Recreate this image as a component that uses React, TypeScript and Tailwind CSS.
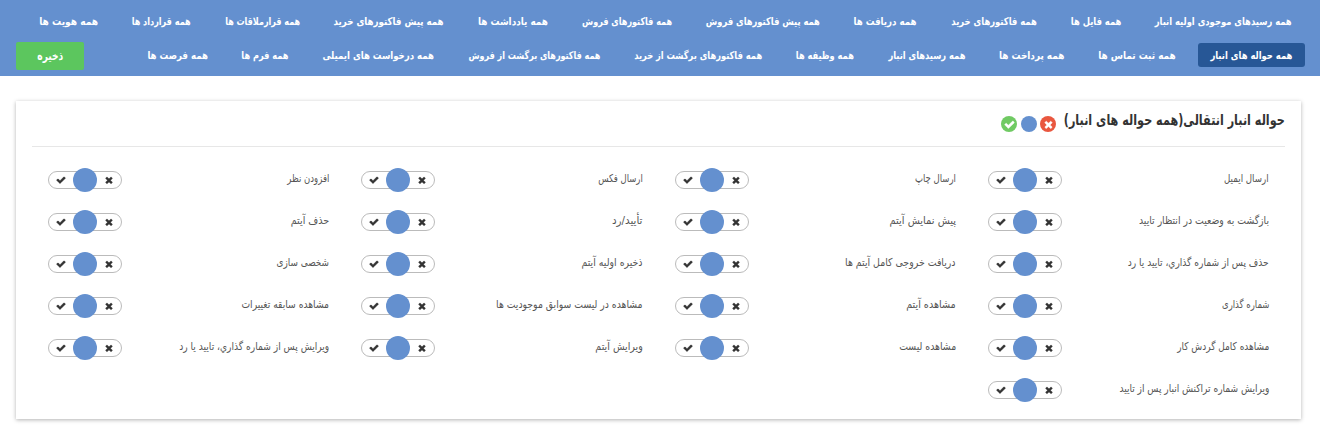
import { useLayoutEffect, useRef } from "react";

type Entry = { text: string; width: number };

const topRow: Entry[] = [
  { text: "همه رسیدهای موجودی اولیه انبار", width: 137 },
  { text: "همه فایل ها", width: 50.5 },
  { text: "همه فاکتورهای خرید", width: 85.5 },
  { text: "همه دریافت ها", width: 63 },
  { text: "همه پیش فاکتورهای فروش", width: 114 },
  { text: "همه فاکتورهای فروش", width: 90 },
  { text: "همه یادداشت ها", width: 70 },
  { text: "همه پیش فاکتورهای خرید", width: 110 },
  { text: "همه قرارملاقات ها", width: 75 },
  { text: "همه قرارداد ها", width: 59 },
  { text: "همه هویت ها", width: 59 },
];

const bottomRow: Entry[] = [
  { text: "همه حواله های انبار", width: 82 },
  { text: "همه ثبت تماس ها", width: 77.5 },
  { text: "همه پرداخت ها", width: 65.5 },
  { text: "همه رسیدهای انبار", width: 77 },
  { text: "همه وظیفه ها", width: 58 },
  { text: "همه فاکتورهای برگشت از خرید", width: 128 },
  { text: "همه فاکتورهای برگشت از فروش", width: 132 },
  { text: "همه درخواست های ایمیلی", width: 111.5 },
  { text: "همه فرم ها", width: 47 },
  { text: "همه فرصت ها", width: 60.5 },
];

const permissions: Entry[] = [
  { text: "ارسال ایمیل", width: 44.5 },
  { text: "ارسال چاپ", width: 41 },
  { text: "ارسال فکس", width: 44.5 },
  { text: "افزودن نظر", width: 42 },
  { text: "بازگشت به وضعیت در انتظار تایید", width: 130 },
  { text: "پیش نمایش آیتم", width: 66.5 },
  { text: "تأیید/رد", width: 30.5 },
  { text: "حذف آیتم", width: 38.5 },
  { text: "حذف پس از شماره گذاري، تایید یا رد", width: 141 },
  { text: "دریافت خروجی کامل آیتم ها", width: 110.5 },
  { text: "ذخیره اولیه آیتم", width: 61 },
  { text: "شخصی سازی", width: 52.5 },
  { text: "شماره گذاری", width: 47.5 },
  { text: "مشاهده آیتم", width: 49.5 },
  { text: "مشاهده در لیست سوابق موجودیت ها", width: 146.5 },
  { text: "مشاهده سابقه تغییرات", width: 87.5 },
  { text: "مشاهده کامل گردش کار", width: 92 },
  { text: "مشاهده لیست", width: 57 },
  { text: "ویرایش آیتم", width: 47.5 },
  { text: "ویرایش پس از شماره گذاري، تایید یا رد", width: 150 },
  { text: "ویرایش شماره تراکنش انبار پس از تایید", width: 150 },
];

/* Condenses a line of text horizontally so that it fills the given width. */
function FitText({ text, width }: Entry) {
  const ref = useRef<HTMLSpanElement>(null);
  useLayoutEffect(() => {
    const el = ref.current;
    if (el) {
      el.style.transform = "none";
      el.style.transform = `scaleX(${width / el.getBoundingClientRect().width})`;
    }
  }, [text, width]);
  return (
    <span className="flex shrink-0 justify-start" style={{ width }}>
      <span ref={ref} className="inline-block shrink-0 origin-right whitespace-nowrap">
        {text}
      </span>
    </span>
  );
}

function Check({ className }: { className: string }) {
  return (
    <svg viewBox="0 0 1792 1792" fill="currentColor" stroke="currentColor" strokeWidth="70" className={className}>
      <path d="M1671 566q0 40-28 68l-724 724-136 136q-28 28-68 28t-68-28l-136-136-362-362q-28-28-28-68t28-68l136-136q28-28 68-28t68 28l294 295 656-657q28-28 68-28t68 28l136 136q28 28 28 68z" />
    </svg>
  );
}

function Times({ className }: { className: string }) {
  return (
    <svg viewBox="0 0 1792 1792" fill="currentColor" stroke="currentColor" strokeWidth="70" className={className}>
      <path d="M1490 1322q0 40-28 68l-136 136q-28 28-68 28t-68-28l-294-294-294 294q-28 28-68 28t-68-28l-136-136q-28-28-28-68t28-68l294-294-294-294q-28-28-28-68t28-68l136-136q28-28 68-28t68 28l294 294 294-294q28-28 68-28t68 28l136 136q28 28 28 68t-28 68l-294 294 294 294q28 28 28 68z" />
    </svg>
  );
}

function Toggle() {
  return (
    <div className="flex h-[18px] w-[74px] items-center justify-between rounded-full border border-[#bbb] bg-white px-[7px] text-[#333]">
      <Times className="size-[10px]" />
      <span className="size-6 shrink-0 rounded-full bg-[#6490cf]" />
      <Check className="size-[10px]" />
    </div>
  );
}

function NavRow({ items, active }: { items: Entry[]; active?: number }) {
  return (
    <nav className="flex h-6 gap-[9px]">
      {items.map((item, i) => (
        <a
          key={item.text}
          className={
            i === active
              ? "flex h-6 items-center rounded-[3px] bg-[#275796] pt-[2px] pr-[13px] pl-3"
              : "flex h-6 items-center pt-[2px] pr-[13px] pl-3"
          }
        >
          <FitText {...item} />
        </a>
      ))}
    </nav>
  );
}

export default function App() {
  return (
    <div dir="rtl" className="h-[429px] overflow-hidden bg-white font-['DejaVu_Sans',sans-serif]">
      <header className="flex h-[76px] flex-col gap-[9px] bg-[#6490cf] pt-[9px] pr-[15px] pl-4 text-[10.5px] font-bold text-white">
        <NavRow items={topRow} />
        <div className="flex items-center justify-between">
          <div className="pb-[2px]">
            <NavRow items={bottomRow} active={0} />
          </div>
          <button className="flex h-7 w-[68px] shrink-0 items-center justify-center rounded-[2px] bg-[#5cc65e] text-[12px]">
            <FitText text="ذخیره" width={26} />
          </button>
        </div>
      </header>
      <main className="mt-[25px] mr-[19px] ml-4 h-[318px] bg-white px-4 shadow-[0_1px_4px_rgba(0,0,0,0.3)]">
        <div className="flex h-[46px] gap-[8px] border-b border-[#e7e7e7]">
          <h1 className="flex h-[38px] items-center text-[15px] font-bold text-[#333]">
            <FitText text="حواله انبار انتقالی(همه حواله های انبار)" width={221} />
          </h1>
          <div className="mt-[15px] flex gap-[3.5px] text-white">
            <span className="flex size-4 items-center justify-center rounded-full bg-[#e9573f]">
              <Times className="size-[11px]" />
            </span>
            <span className="size-4 rounded-full bg-[#6490cf]" />
            <span className="flex size-4 items-center justify-center rounded-full bg-[#70ca63]">
              <Check className="size-[11px]" />
            </span>
          </div>
        </div>
        <div className="grid grid-cols-4 pt-3 text-[11px] text-[#555]">
          {permissions.map((item) => (
            <div key={item.text} className="flex h-[42px] items-center justify-between px-4">
              <div className="pb-px">
                <FitText {...item} />
              </div>
              <Toggle />
            </div>
          ))}
        </div>
      </main>
    </div>
  );
}
